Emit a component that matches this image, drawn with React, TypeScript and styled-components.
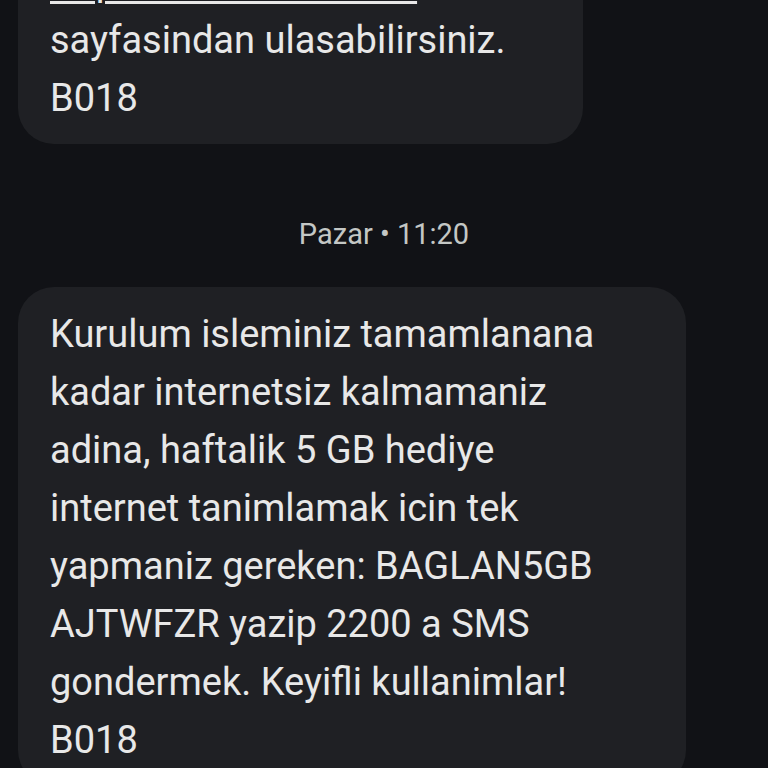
import React from "react";
import styled, { createGlobalStyle } from "styled-components";

const GlobalStyle = createGlobalStyle`
  html, body {
    margin: 0;
    padding: 0;
    background: #111216;
    overflow: hidden;
  }
  body {
    font-family: Roboto, "Noto Sans", "Liberation Sans", sans-serif;
    -webkit-font-smoothing: antialiased;
  }
`;

const Screen = styled.div`
  width: 768px;
  height: 768px;
  overflow: hidden;
  background: #111216;
`;

const Thread = styled.div`
  display: flex;
  flex-direction: column;
  align-items: flex-start;
  padding: 0 18px;
  margin-top: -123px;
`;

const Bubble = styled.div<{ $width: number }>`
  box-sizing: border-box;
  width: ${(p) => p.$width}px;
  background: #1f2024;
  border-radius: 36px;
  padding: 18px 32px 17px;
  color: #e8e8e8;
  font-size: 38px;
  line-height: 58px;
`;

const Line = styled.span`
  display: block;
  white-space: nowrap;
`;

const Link = styled.span`
  text-decoration: underline;
  text-decoration-thickness: 3px;
  text-underline-offset: 6px;
`;

const Stamp = styled.div`
  align-self: center;
  margin: 70px 0 33px;
  font-size: 29px;
  line-height: 40px;
  color: #c4c7c5;
  white-space: nowrap;
`;

const first = ["Detayli bilgiye"];
const firstTail = ["sayfasindan ulasabilirsiniz.", "B018"];

const second = [
  "Kurulum isleminiz tamamlanana",
  "kadar internetsiz kalmamaniz",
  "adina, haftalik 5 GB hediye",
  "internet tanimlamak icin tek",
  "yapmaniz gereken: BAGLAN5GB",
  "AJTWFZR yazip 2200 a SMS",
  "gondermek. Keyifli kullanimlar!",
  "B018",
];

export default function App() {
  return (
    <Screen>
      <GlobalStyle />
      <Thread>
        <Bubble $width={565}>
          {first.map((l) => (
            <Line key={l}>{l}</Line>
          ))}
          <Line>
            <Link>https://turkcell.com.tr</Link>
          </Line>
          {firstTail.map((l) => (
            <Line key={l}>{l}</Line>
          ))}
        </Bubble>
        <Stamp>Pazar • 11:20</Stamp>
        <Bubble $width={668}>
          {second.map((l, i) => (
            <Line key={i}>{l}</Line>
          ))}
        </Bubble>
      </Thread>
    </Screen>
  );
}
